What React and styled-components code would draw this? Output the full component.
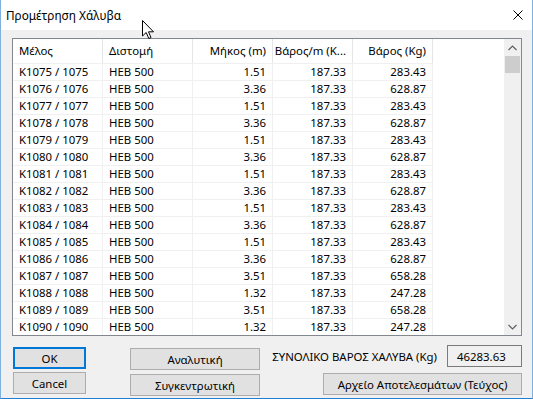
import React from 'react';
import styled, { createGlobalStyle } from 'styled-components';

const FONT = '"Noto Sans", "Liberation Sans", sans-serif';
const SIZE = '11.4px';

const Global = createGlobalStyle`
  html, body { margin: 0; padding: 0; background: #ffffff; }
  body { font-family: ${FONT}; font-size: ${SIZE}; color: #000; }
  * { box-sizing: border-box; }
`;

const Window = styled.div`
  position: relative;
  width: 533px;
  height: 399px;
  display: flex;
  flex-direction: column;
  background: #f0f0f0;
  border-left: 1px solid #7fb0de;
  border-right: 1px solid #7fb0de;
  border-bottom: 1px solid #1f7fd4;
  overflow: hidden;
`;

const TitleBar = styled.div`
  height: 30px;
  flex: none;
  display: flex;
  align-items: center;
  padding-left: 5px;
  background: #ffffff;
`;

const Title = styled.span`
  font-size: 11.8px;
  line-height: 16px;
  color: #000;
`;

const CloseBox = styled.div`
  margin-left: auto;
  margin-right: 9px;
  width: 10px;
  height: 10px;
  display: flex;
`;

const Body = styled.div`
  flex: 1;
  display: flex;
  flex-direction: column;
  padding: 8px 10px 0 11px;
`;

const List = styled.div`
  width: 510px;
  height: 298px;
  border: 1px solid #828790;
  background: #ffffff;
  display: flex;
`;

const GridArea = styled.div`
  flex: 1;
  display: flex;
  flex-direction: column;
`;

const columns = '90px 90px 80px 80px 80px';

const HeaderRow = styled.div`
  display: grid;
  grid-template-columns: ${columns};
  width: 420px;
  height: 24px;
`;

const HeadCell = styled.div`
  display: flex;
  align-items: center;
  justify-content: ${p => (p.$right ? 'flex-end' : 'flex-start')};
  padding: 0 6px 1px 6px;
  border-right: 1px solid #e5e5e5;
  white-space: nowrap;
  overflow: hidden;
  color: #000;
`;

const Row = styled.div`
  display: grid;
  grid-template-columns: ${columns};
  width: 420px;
  height: 17px;
  border-top: 1px solid #f0f0f0;
`;

const Cell = styled.div`
  display: flex;
  align-items: center;
  justify-content: ${p => (p.$right ? 'flex-end' : 'flex-start')};
  padding: 0 6px;
  border-right: 1px solid #f0f0f0;
  white-space: nowrap;
  overflow: hidden;
  line-height: 16px;
`;

const ScrollBar = styled.div`
  width: 17px;
  flex: none;
  background: #f0f0f0;
  display: flex;
  flex-direction: column;
`;

const ScrollArrow = styled.div`
  height: 17px;
  display: flex;
  align-items: center;
  justify-content: center;
`;

const ScrollTrack = styled.div`
  flex: 1;
  padding: 0 1px;
`;

const Thumb = styled.div`
  height: 17px;
  background: #cdcdcd;
`;

const Bottom = styled.div`
  display: flex;
  width: 510px;
  padding-left: 1px;
`;

const ButtonColumn = styled.div`
  display: flex;
  flex-direction: column;
  width: ${p => p.$width}px;
  margin-left: ${p => p.$offset || 0}px;
  padding-top: ${p => p.$top}px;
  gap: ${p => p.$gap}px;
`;

const Button = styled.button`
  height: 22px;
  width: ${p => (p.$width ? `${p.$width}px` : '100%')};
  background: #e1e1e1;
  border: 1px solid ${p => (p.$default ? '#0078d7' : '#adadad')};
  box-shadow: ${p => (p.$default ? 'inset 0 0 0 1px #0078d7' : 'none')};
  font-family: ${FONT};
  font-size: ${SIZE};
  color: #000;
  padding: 0;
  display: flex;
  align-items: center;
  justify-content: center;
`;

const TotalColumn = styled.div`
  flex: 1;
  display: flex;
  flex-direction: column;
  align-items: flex-end;
  padding-top: 9px;
  gap: 6px;
`;

const TotalRow = styled.div`
  display: flex;
  align-items: center;
  gap: 10px;
`;

const Label = styled.span`
  white-space: nowrap;
`;

const TotalBox = styled.div`
  width: 75px;
  height: 22px;
  border: 1px solid #7a7a7a;
  background: #f0f0f0;
  display: flex;
  align-items: center;
  padding-left: 9px;
`;

const Cursor = styled.svg`
  position: absolute;
  left: 141px;
  top: 20px;
`;

const rows = [
  ['K1075 / 1075', 'HEB 500', '1.51', '187.33', '283.43'],
  ['K1076 / 1076', 'HEB 500', '3.36', '187.33', '628.87'],
  ['K1077 / 1077', 'HEB 500', '1.51', '187.33', '283.43'],
  ['K1078 / 1078', 'HEB 500', '3.36', '187.33', '628.87'],
  ['K1079 / 1079', 'HEB 500', '1.51', '187.33', '283.43'],
  ['K1080 / 1080', 'HEB 500', '3.36', '187.33', '628.87'],
  ['K1081 / 1081', 'HEB 500', '1.51', '187.33', '283.43'],
  ['K1082 / 1082', 'HEB 500', '3.36', '187.33', '628.87'],
  ['K1083 / 1083', 'HEB 500', '1.51', '187.33', '283.43'],
  ['K1084 / 1084', 'HEB 500', '3.36', '187.33', '628.87'],
  ['K1085 / 1085', 'HEB 500', '1.51', '187.33', '283.43'],
  ['K1086 / 1086', 'HEB 500', '3.36', '187.33', '628.87'],
  ['K1087 / 1087', 'HEB 500', '3.51', '187.33', '658.28'],
  ['K1088 / 1088', 'HEB 500', '1.32', '187.33', '247.28'],
  ['K1089 / 1089', 'HEB 500', '3.51', '187.33', '658.28'],
  ['K1090 / 1090', 'HEB 500', '1.32', '187.33', '247.28'],
];

const headers = [
  ['Μέλος', false],
  ['Διστομή', false],
  ['Μήκος (m)', true],
  ['Βάρος/m (K...', true],
  ['Βάρος (Kg)', true],
];

const Chevron = ({ down }) => (
  <svg width="9" height="6" viewBox="0 0 9 6">
    <polyline
      points={down ? '0.5,1 4.5,5 8.5,1' : '0.5,5 4.5,1 8.5,5'}
      fill="none"
      stroke="#606060"
      strokeWidth="1.2"
    />
  </svg>
);

export default function App() {
  return (
    <>
      <Global />
      <Window>
        <TitleBar>
          <Title>Προμέτρηση Χάλυβα</Title>
          <CloseBox>
            <svg width="10" height="10" viewBox="0 0 10 10">
              <path d="M0.5 0.5 L9.5 9.5 M9.5 0.5 L0.5 9.5" stroke="#000" strokeWidth="1" />
            </svg>
          </CloseBox>
        </TitleBar>
        <Body>
          <List>
            <GridArea>
              <HeaderRow>
                {headers.map(([h, right]) => (
                  <HeadCell key={h} $right={right}>{h}</HeadCell>
                ))}
              </HeaderRow>
              {rows.map(r => (
                <Row key={r[0]}>
                  <Cell>{r[0]}</Cell>
                  <Cell>{r[1]}</Cell>
                  <Cell $right>{r[2]}</Cell>
                  <Cell $right>{r[3]}</Cell>
                  <Cell $right>{r[4]}</Cell>
                </Row>
              ))}
            </GridArea>
            <ScrollBar>
              <ScrollArrow><Chevron /></ScrollArrow>
              <ScrollTrack><Thumb /></ScrollTrack>
              <ScrollArrow><Chevron down /></ScrollArrow>
            </ScrollBar>
          </List>
          <Bottom>
            <ButtonColumn $width={73} $top={11} $gap={3}>
              <Button $default>OK</Button>
              <Button>Cancel</Button>
            </ButtonColumn>
            <ButtonColumn $width={130} $offset={44} $top={12} $gap={4}>
              <Button>Αναλυτική</Button>
              <Button>Συγκεντρωτική</Button>
            </ButtonColumn>
            <TotalColumn>
              <TotalRow>
                <Label>ΣΥΝΟΛΙΚΟ ΒΑΡΟΣ ΧΑΛΥΒΑ (Kg)</Label>
                <TotalBox>46283.63</TotalBox>
              </TotalRow>
              <Button $width={199}>Αρχείο Αποτελεσμάτων (Τεύχος)</Button>
            </TotalColumn>
          </Bottom>
        </Body>
        <Cursor width="13" height="20" viewBox="0 0 13 20">
          <path d="M0.5 0.5 L0.5 16 L4.2 12.5 L6.8 18.5 L9 17.5 L6.5 11.8 L11.5 11.8 Z" fill="#fff" stroke="#000" strokeWidth="1" strokeLinejoin="miter" />
        </Cursor>
      </Window>
    </>
  );
}
